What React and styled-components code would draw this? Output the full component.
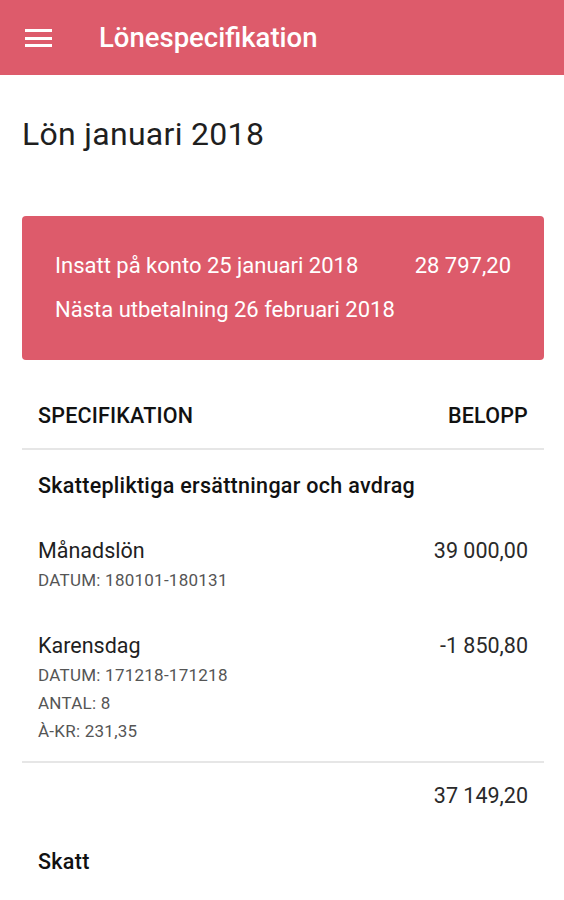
import React from 'react'
import styled, { createGlobalStyle } from 'styled-components'

const GlobalStyle = createGlobalStyle`
    body {
        margin: 0;
        background: #fff;
        font-family: Roboto, "Noto Sans", sans-serif;
        color: #212121;
    }
`

const Page = styled.div`
    width: 564px;
    min-height: 900px;
    overflow: hidden;
`

const AppBar = styled.header`
    height: 75px;
    background: #dd5b6b;
    display: flex;
    align-items: center;
    padding-left: 25px;
    box-sizing: border-box;
`

const MenuButton = styled.div`
    width: 27px;
    display: flex;
    flex-direction: column;
    gap: 4.5px;
    margin-right: 47px;
    margin-top: 1px;

    span {
        display: block;
        height: 3px;
        background: #fff;
    }
`

const Title = styled.h1`
    margin: 0;
    color: #fff;
    font-size: 27.5px;
    font-weight: 500;
    line-height: 32px;
`

const Content = styled.main`
    padding: 0 20px 0 22px;
`

const Heading = styled.h2`
    margin: 0;
    padding-top: 39px;
    font-size: 32px;
    font-weight: 400;
    line-height: 40px;
    letter-spacing: 0.3px;
    color: #1f1f1f;
`

const PayCard = styled.section`
    margin-top: 62px;
    background: #dd5b6b;
    border-radius: 4px;
    height: 144px;
    padding: 28px 33px 0 33px;
    box-sizing: border-box;
    color: #fff;
    font-size: 22px;
`

const CardRow = styled.div`
    display: flex;
    justify-content: space-between;
    line-height: 44px;
`

const TableHead = styled.div`
    display: flex;
    justify-content: space-between;
    padding: 44px 16px 20px;
    line-height: 24px;
    font-size: 21.5px;
    font-weight: 500;
    letter-spacing: 0.2px;
    color: #111;
    border-bottom: 2px solid #e6e6e6;
`

const GroupTitle = styled.div`
    padding: 0 16px;
    font-size: 21.5px;
    font-weight: 500;
    letter-spacing: 0.3px;
    color: #111;
    line-height: 24px;
    margin-top: ${p => p.top}px;
`

const Item = styled.div`
    display: flex;
    justify-content: space-between;
    padding: 0 16px;
    margin-top: ${p => p.top}px;
`

const ItemName = styled.div`
    font-size: 21.5px;
    line-height: 30px;
    color: #1f1f1f;
`

const Amount = styled.div`
    font-size: 21.5px;
    line-height: 30px;
    color: #2a2a2a;
`

const Meta = styled.div`
    font-size: 17px;
    line-height: 28px;
    letter-spacing: 0.25px;
    color: #555;
`

const SumRow = styled.div`
    border-top: 2px solid #e6e6e6;
    margin-top: 16px;
    padding: 18px 16px 0;
    display: flex;
    justify-content: flex-end;
`

export default function App() {
    return (
        <Page>
            <GlobalStyle />
            <AppBar>
                <MenuButton>
                    <span></span>
                    <span></span>
                    <span></span>
                </MenuButton>
                <Title>Lönespecifikation</Title>
            </AppBar>
            <Content>
                <Heading>Lön januari 2018</Heading>
                <PayCard>
                    <CardRow>
                        <span>Insatt på konto 25 januari 2018</span>
                        <span>28 797,20</span>
                    </CardRow>
                    <CardRow>
                        <span>Nästa utbetalning 26 februari 2018</span>
                    </CardRow>
                </PayCard>
                <TableHead>
                    <span>SPECIFIKATION</span>
                    <span>BELOPP</span>
                </TableHead>
                <GroupTitle top={24}>Skattepliktiga ersättningar och avdrag</GroupTitle>
                <Item top={38}>
                    <div>
                        <ItemName>Månadslön</ItemName>
                        <Meta>DATUM: 180101-180131</Meta>
                    </div>
                    <Amount>39 000,00</Amount>
                </Item>
                <Item top={37}>
                    <div>
                        <ItemName>Karensdag</ItemName>
                        <Meta>DATUM: 171218-171218</Meta>
                        <Meta>ANTAL: 8</Meta>
                        <Meta>À-KR: 231,35</Meta>
                    </div>
                    <Amount>-1 850,80</Amount>
                </Item>
                <SumRow>
                    <Amount>37 149,20</Amount>
                </SumRow>
                <GroupTitle top={39}>Skatt</GroupTitle>
            </Content>
        </Page>
    )
}
